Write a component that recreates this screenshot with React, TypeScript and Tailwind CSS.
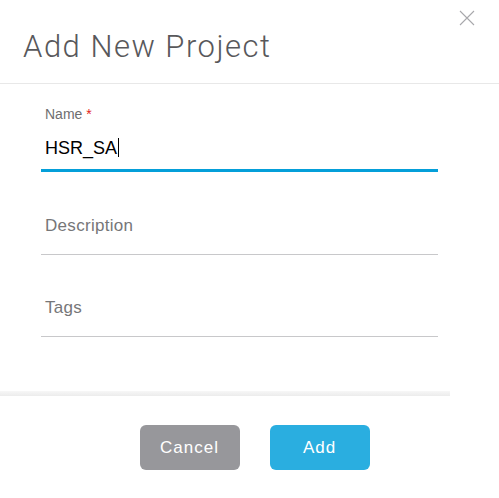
import { useState } from 'react';

const font = { fontFamily: '"Liberation Sans", Arial, sans-serif' };
const titleFont = { fontFamily: 'Roboto, "Liberation Sans", sans-serif' };

function Field({ label, required, value, placeholder, active }: { label?: string; required?: boolean; value?: string; placeholder?: string; active?: boolean }) {
  return (
    <div className="ml-[41px] mr-[61px]">
      <div className="h-[26px] pl-1 text-[14px] leading-[26px] text-[#6e6e70]">
        {label && (
          <>
            {label} {required && <span className="text-[#e2231a]">*</span>}
          </>
        )}
      </div>
      {value ? (
        <div className={`flex h-[45px] items-center pl-1 ${active ? 'border-b-[3px] border-[#049fd9]' : 'border-b border-[#c8c8ca]'}`}>
          <span className="text-[18px] text-black">
            {value}
            <span className="ml-px inline-block h-[19px] w-px translate-y-[3px] bg-black" />
          </span>
        </div>
      ) : (
        <div className="h-[44px] border-b border-[#c8c8ca] pl-1">
          <span className="block translate-y-[2px] text-[17px] tracking-[0.3px] text-[#767678]">{placeholder}</span>
        </div>
      )}
    </div>
  );
}

export default function App() {
  const [name] = useState('HSR_SA');

  return (
    <div className="h-[498px] w-[499px] bg-white" style={font}>
      <div className="relative h-[84px] border-b border-[#e8e8e8]">
        <h1 className="pl-[23px] pt-[24px] text-[31px] font-light tracking-[1.5px] text-[#58585b]" style={titleFont}>Add New Project</h1>
        <button className="absolute right-[24px] top-[10px] h-[16px] w-[16px]">
          <svg viewBox="0 0 16 16" width="16" height="16" fill="none" stroke="#a8a8ac" strokeWidth="1.1">
            <path d="M1 1L15 15M15 1L1 15" />
          </svg>
        </button>
      </div>

      <div className="pt-[17px]">
        <Field label="Name" required value={name} active />
        <div className="h-[13px]" />
        <Field placeholder="Description" />
        <div className="h-[12px]" />
        <Field placeholder="Tags" />
      </div>

      <div className="mt-[54px] h-[5px] w-[450px] bg-gradient-to-b from-[#f7f7f7] to-[#ececec]" />

      <div className="flex justify-center gap-[30px] pl-[10px] pt-[29px]">
        <button className="h-[45px] w-[100px] rounded-[6px] bg-[#97979b] text-[17px] tracking-[1px] text-white">Cancel</button>
        <button className="h-[45px] w-[100px] rounded-[6px] bg-[#2aaee0] text-[17px] tracking-[1px] text-white">Add</button>
      </div>
    </div>
  );
}
